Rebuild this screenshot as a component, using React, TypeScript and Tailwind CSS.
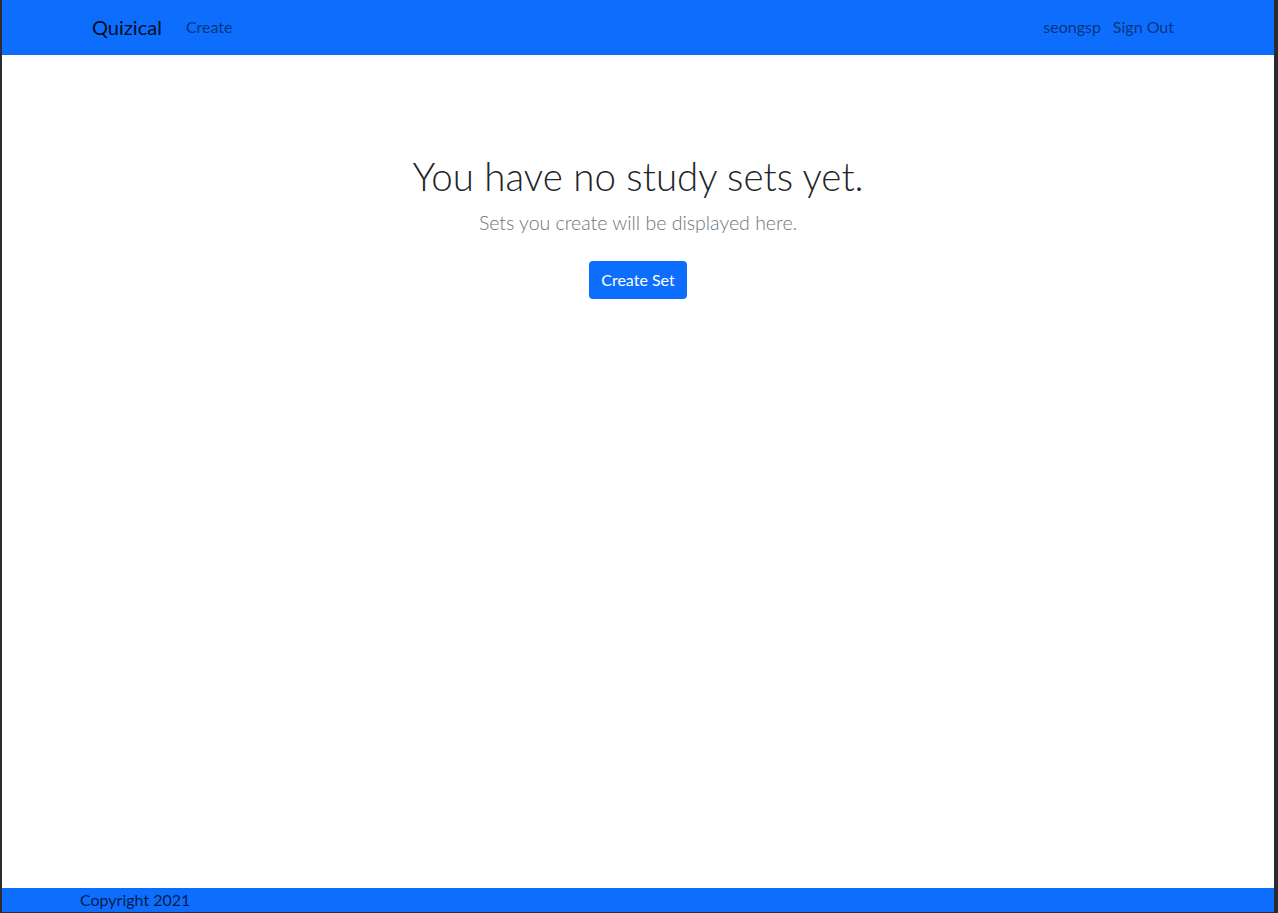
export default function App() {
  return (
    <div
      className="flex h-screen flex-col border-l-2 border-r-4 border-b border-[#2b2b2d] bg-white text-[#212529]"
      style={{ fontFamily: '"Segoe UI", Lato, "Noto Sans", sans-serif' }}
    >
      <nav className="flex h-[55px] shrink-0 items-center bg-[#0d6efd] pl-[90px] pr-[95px] pb-px">
        <a href="#" className="mr-4 text-[20px] text-black/90">
          Quizical
        </a>
        <a href="#" className="px-2 text-[16px] text-black/55">
          Create
        </a>
        <div className="ml-auto flex items-center">
          <span className="px-[5px] text-[16px] text-black/55">seongsp</span>
          <a href="#" className="pl-[7px] pr-[5px] text-[16px] text-black/55">
            Sign Out
          </a>
        </div>
      </nav>

      <main className="flex flex-1 flex-col items-center pt-[97px]">
        <h1 className="mb-2 text-[38.5px] font-light leading-[48px]">You have no study sets yet.</h1>
        <p className="mb-[23px] text-[19.5px] font-light leading-[30px] text-[#6c757d]">
          Sets you create will be displayed here.
        </p>
        <button className="h-[38px] rounded-[4px] bg-[#0d6efd] px-3 text-[16px] text-white">
          Create Set
        </button>
      </main>

      <footer className="flex h-6 shrink-0 items-center bg-[#0d6efd] pl-[78px] text-[16px] text-black/75">
        Copyright 2021
      </footer>
    </div>
  );
}
